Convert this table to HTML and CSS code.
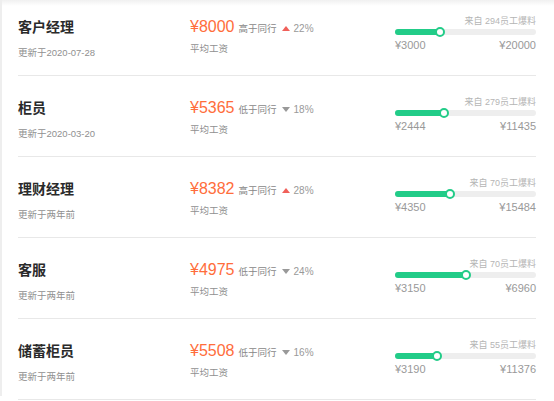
FILE: index.html
```html
<!DOCTYPE html>
<html lang="zh">
<head>
<meta charset="utf-8">
<link rel="stylesheet" href="styles.css">
</head>
<body>
<div class="page">
  <ul class="list">
    <li class="row">
      <div class="job"><div class="title">客户经理</div><div class="date">更新于2020-07-28</div></div>
      <div class="pay">
        <div class="pay-line"><span class="price">¥8000</span><span class="cmp">高于同行</span><span class="tri up"></span><span class="pct">22%</span></div>
        <div class="avg">平均工资</div>
      </div>
      <div class="range">
        <div class="src">来自 294员工爆料</div>
        <div class="track"><div class="fill" style="width:32%"></div></div>
        <div class="ends"><span>¥3000</span><span>¥20000</span></div>
      </div>
    </li>
    <li class="row">
      <div class="job"><div class="title">柜员</div><div class="date">更新于2020-03-20</div></div>
      <div class="pay">
        <div class="pay-line"><span class="price">¥5365</span><span class="cmp">低于同行</span><span class="tri down"></span><span class="pct">18%</span></div>
        <div class="avg">平均工资</div>
      </div>
      <div class="range">
        <div class="src">来自 279员工爆料</div>
        <div class="track"><div class="fill" style="width:35%"></div></div>
        <div class="ends"><span>¥2444</span><span>¥11435</span></div>
      </div>
    </li>
    <li class="row">
      <div class="job"><div class="title">理财经理</div><div class="date">更新于两年前</div></div>
      <div class="pay">
        <div class="pay-line"><span class="price">¥8382</span><span class="cmp">高于同行</span><span class="tri up"></span><span class="pct">28%</span></div>
        <div class="avg">平均工资</div>
      </div>
      <div class="range">
        <div class="src">来自 70员工爆料</div>
        <div class="track"><div class="fill" style="width:39%"></div></div>
        <div class="ends"><span>¥4350</span><span>¥15484</span></div>
      </div>
    </li>
    <li class="row">
      <div class="job"><div class="title">客服</div><div class="date">更新于两年前</div></div>
      <div class="pay">
        <div class="pay-line"><span class="price">¥4975</span><span class="cmp">低于同行</span><span class="tri down"></span><span class="pct">24%</span></div>
        <div class="avg">平均工资</div>
      </div>
      <div class="range">
        <div class="src">来自 70员工爆料</div>
        <div class="track"><div class="fill" style="width:50%"></div></div>
        <div class="ends"><span>¥3150</span><span>¥6960</span></div>
      </div>
    </li>
    <li class="row">
      <div class="job"><div class="title">储蓄柜员</div><div class="date">更新于两年前</div></div>
      <div class="pay">
        <div class="pay-line"><span class="price">¥5508</span><span class="cmp">低于同行</span><span class="tri down"></span><span class="pct">16%</span></div>
        <div class="avg">平均工资</div>
      </div>
      <div class="range">
        <div class="src">来自 55员工爆料</div>
        <div class="track"><div class="fill" style="width:30%"></div></div>
        <div class="ends"><span>¥3190</span><span>¥11376</span></div>
      </div>
    </li>
  </ul>
</div>
</body>
</html>
```
FILE: styles.css
```css
html, body {
  margin: 0;
  padding: 0;
  height: 100%;
  overflow: hidden;
}
body {
  font-family: "Liberation Sans", "Noto Sans CJK SC", sans-serif;
  background: linear-gradient(#f0f0f0, #ffffff 6px);
  color: #333;
}
.page {
  border-left: 2px solid #eeeeee;
  height: 100%;
  padding: 0 18px 0 16px;
}
.list {
  list-style: none;
  margin: -5px 0 0 0;
  padding: 0;
}
.row {
  height: 81px;
  box-sizing: border-box;
  border-bottom: 1px solid #e8e8e8;
  display: flex;
  align-items: flex-start;
}
.job {
  width: 172px;
  padding-top: 23px;
}
.title {
  font-size: 14px;
  font-weight: bold;
  line-height: 18px;
  color: #2a2a2a;
}
.date {
  margin-top: 10px;
  font-size: 9.5px;
  line-height: 14px;
  color: #909090;
}
.pay {
  width: 205px;
  padding-top: 22px;
}
.pay-line {
  display: flex;
  align-items: center;
  height: 20px;
}
.price {
  font-size: 16px;
  color: #ff6d3b;
}
.cmp {
  font-size: 9.5px;
  color: #888;
  margin-left: 4px;
  margin-top: 2px;
}
.tri {
  width: 0;
  height: 0;
  margin: 2px 4px 0 5px;
  border-left: 4px solid transparent;
  border-right: 4px solid transparent;
}
.tri.up {
  border-bottom: 5px solid #f0605a;
}
.tri.down {
  border-top: 5px solid #999;
}
.pct {
  font-size: 10px;
  color: #999;
  margin-top: 2px;
}
.avg {
  margin-top: 5px;
  font-size: 9.5px;
  line-height: 14px;
  color: #909090;
}
.range {
  flex: 1;
  padding-top: 19px;
}
.src {
  text-align: right;
  font-size: 9px;
  line-height: 14px;
  color: #b5b5b5;
}
.track {
  margin-top: 1px;
  height: 6px;
  border-radius: 3px;
  background: #eeeeee;
  display: flex;
  align-items: center;
}
.fill {
  height: 6px;
  border-radius: 3px 0 0 3px;
  background: #22cc88;
  position: relative;
}
.fill::after {
  content: "";
  position: absolute;
  right: -5px;
  top: -2px;
  width: 6px;
  height: 6px;
  border: 2px solid #22cc88;
  border-radius: 50%;
  background: #fff;
}
.ends {
  display: flex;
  justify-content: space-between;
  margin-top: 3px;
  font-size: 11px;
  line-height: 14px;
  color: #999;
}
```
